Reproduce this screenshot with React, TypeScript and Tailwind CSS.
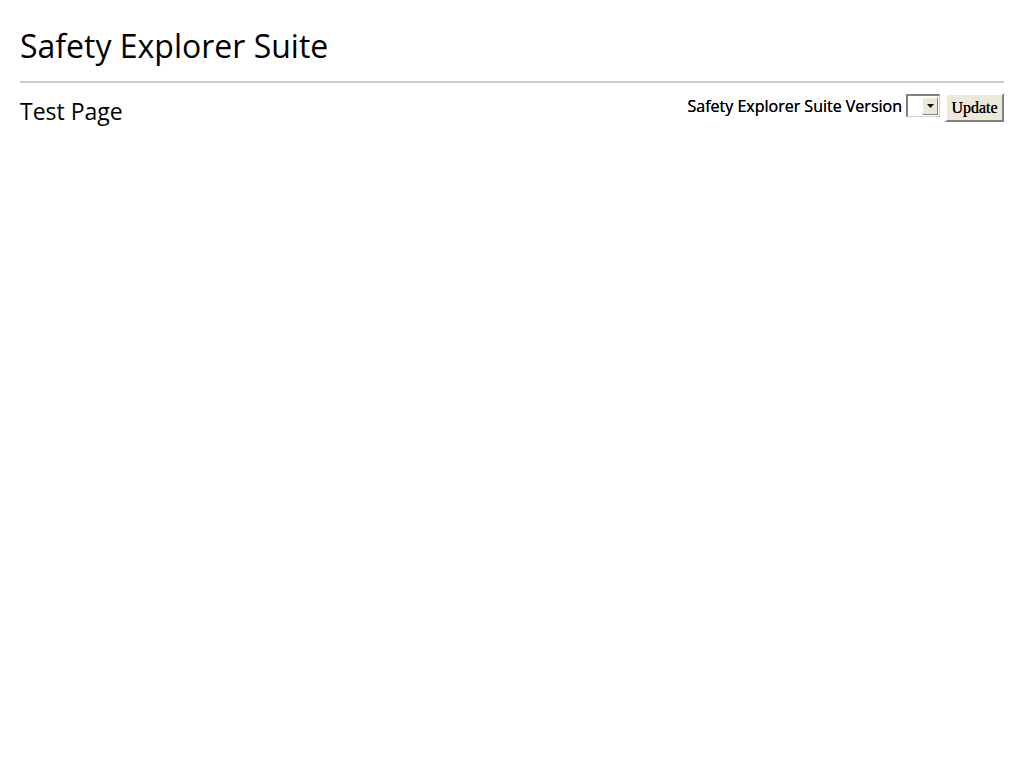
import React from "react";

export default function App() {
  return (
    <div className="min-h-[768px] bg-white px-5 text-black" style={{ fontFamily: '"Open Sans", sans-serif' }}>
      <h1 className="pt-[26px] pb-[15px] text-[32px] leading-[40px] font-normal border-b-2 border-[#cccccc]">
        Safety Explorer Suite
      </h1>
      <div className="flex items-start justify-between pt-[10px]">
        <h2 className="pt-[1px] text-[23px] leading-[34px] font-normal">Test Page</h2>
        <div className="flex items-center">
          <label className="-mt-[3px] text-[16px] leading-[24px] mr-[4px] [text-shadow:0_0_0.3px_#000]">Safety Explorer Suite Version</label>
          <div className="-mt-[4px] flex h-[23px] w-[34px] border-t-2 border-l-2 border-b border-r border-t-[#808080] border-l-[#808080] border-b-[#d4d0c8] border-r-[#d4d0c8] bg-white">
            <div className="flex-1" />
            <div className="my-[1px] mr-[1px] flex w-[16px] items-center justify-center bg-[#ece9d8] border border-t-[#ffffff] border-l-[#ffffff] border-b-[#808080] border-r-[#808080]">
              <svg width="7" height="4" viewBox="0 0 7 4"><path d="M0 0h7L3.5 4z" fill="#000" /></svg>
            </div>
          </div>
          <button
            className="ml-[5px] h-[29px] w-[59px] bg-[#ece9d8] text-[16px] leading-[20px] text-black border-2 border-t-[#ffffff] border-l-[#ffffff] border-b-[#808080] border-r-[#808080] [text-shadow:0_0_0.4px_#000]"
            style={{ fontFamily: '"Liberation Serif", serif' }}
          >
            Update
          </button>
        </div>
      </div>
    </div>
  );
}
